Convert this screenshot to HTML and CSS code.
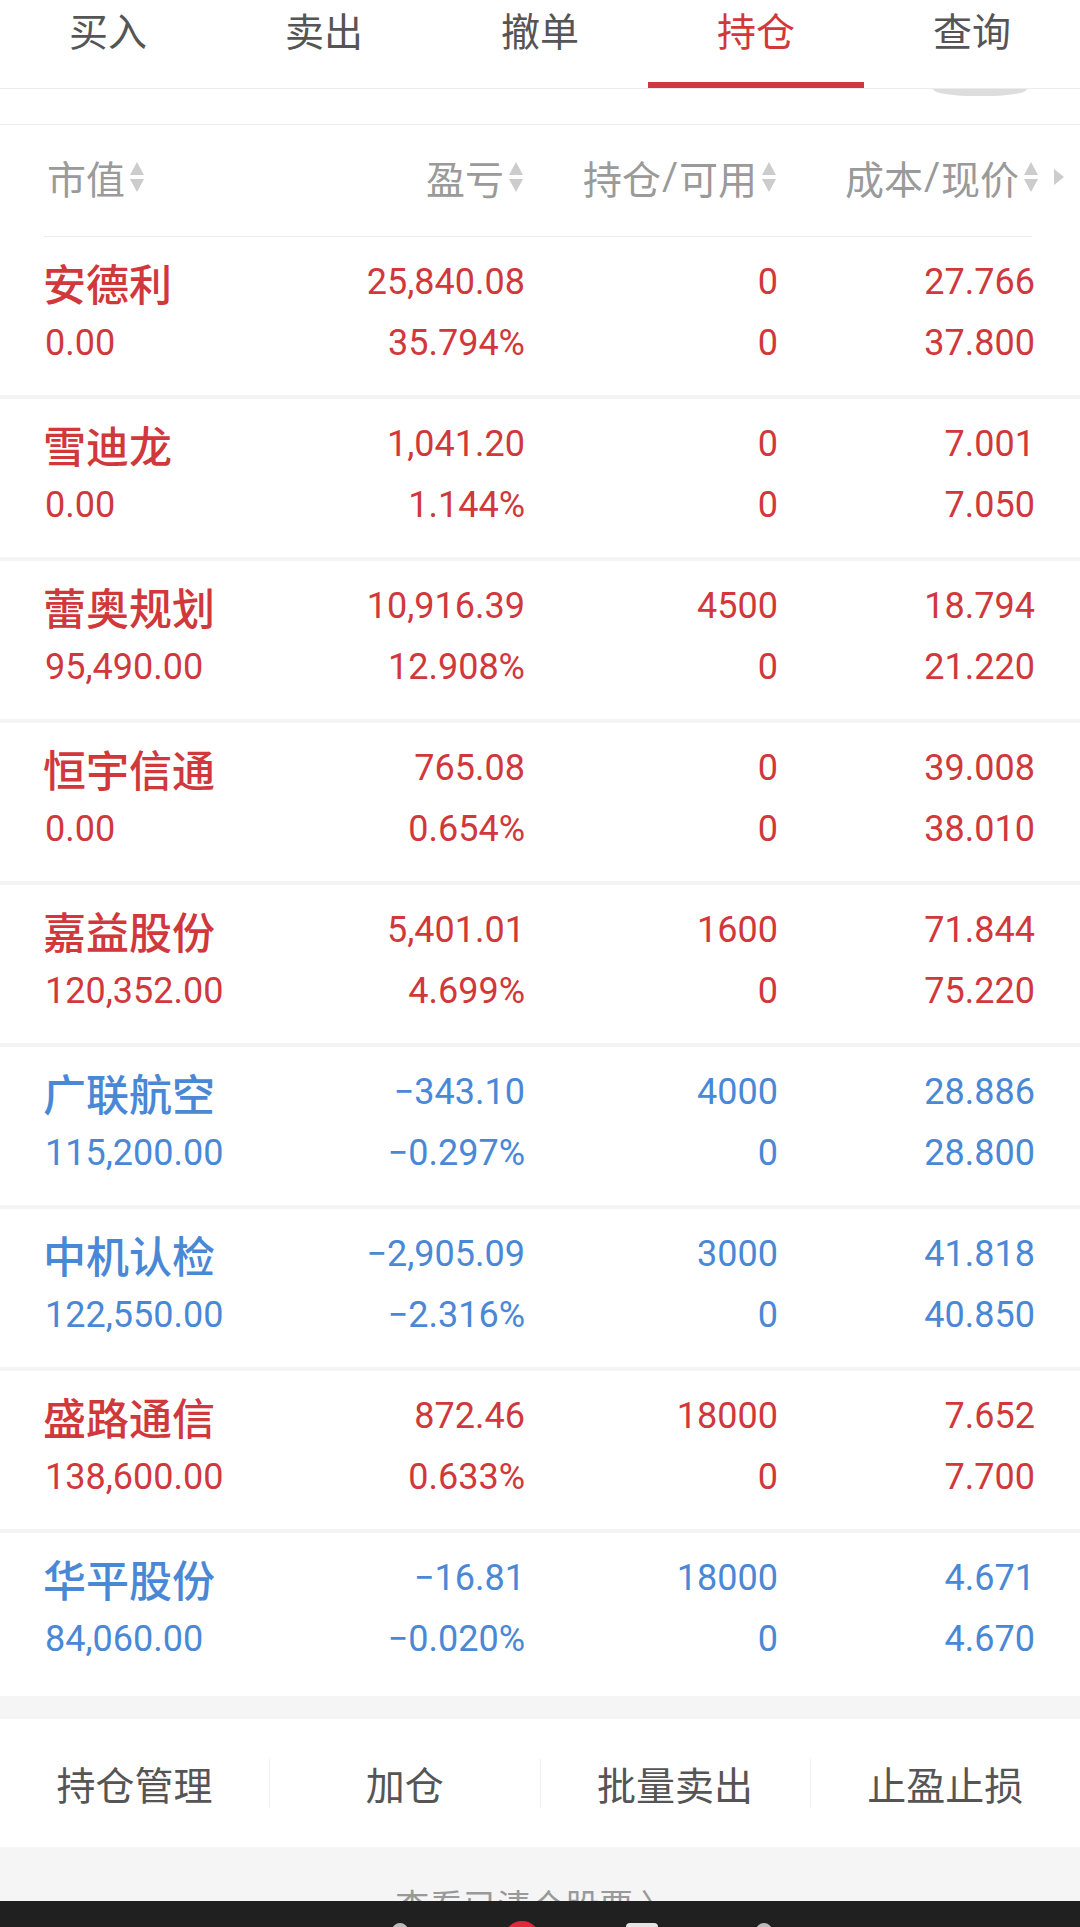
FILE: index.html
```html
<!DOCTYPE html>
<html lang="zh-CN">
<head>
<meta charset="utf-8">
<title>持仓</title>
<link rel="stylesheet" href="styles.css">
</head>
<body>
<div class="page">
  <nav class="tabs">
    <div class="tab"><span class="tab-label">买入</span></div>
    <div class="tab"><span class="tab-label">卖出</span></div>
    <div class="tab"><span class="tab-label">撤单</span></div>
    <div class="tab active"><span class="tab-label">持仓</span><span class="tab-bar"></span></div>
    <div class="tab"><span class="tab-label">查询</span></div>
  </nav>
  <div class="subbar"><span class="pill"></span></div>

  <div class="thead-wrap">
    <div class="thead">
      <div class="th left">市值<svg class="sort" viewBox="0 0 18 30"><path d="M9 0 L16 13 H2 Z"/><path d="M2 17 H16 L9 30 Z"/></svg></div>
      <div class="th">盈亏<svg class="sort" viewBox="0 0 18 30"><path d="M9 0 L16 13 H2 Z"/><path d="M2 17 H16 L9 30 Z"/></svg></div>
      <div class="th">持仓<span class="slash">/</span>可用<svg class="sort" viewBox="0 0 18 30"><path d="M9 0 L16 13 H2 Z"/><path d="M2 17 H16 L9 30 Z"/></svg></div>
      <div class="th last">成本<span class="slash">/</span>现价<svg class="sort" viewBox="0 0 18 30"><path d="M9 0 L16 13 H2 Z"/><path d="M2 17 H16 L9 30 Z"/></svg></div>
    </div>
    <svg class="more-arrow" viewBox="0 0 10 16"><path d="M0 0 L10 8 L0 16 Z"/></svg>
  </div>

  <div class="list">
    <div class="row up">
      <div class="name">安德利</div><div class="num">25,840.08</div><div class="num">0</div><div class="num">27.766</div>
      <div class="num l">0.00</div><div class="num">35.794%</div><div class="num">0</div><div class="num">37.800</div>
    </div>
    <div class="row up">
      <div class="name">雪迪龙</div><div class="num">1,041.20</div><div class="num">0</div><div class="num">7.001</div>
      <div class="num l">0.00</div><div class="num">1.144%</div><div class="num">0</div><div class="num">7.050</div>
    </div>
    <div class="row up">
      <div class="name">蕾奥规划</div><div class="num">10,916.39</div><div class="num">4500</div><div class="num">18.794</div>
      <div class="num l">95,490.00</div><div class="num">12.908%</div><div class="num">0</div><div class="num">21.220</div>
    </div>
    <div class="row up">
      <div class="name">恒宇信通</div><div class="num">765.08</div><div class="num">0</div><div class="num">39.008</div>
      <div class="num l">0.00</div><div class="num">0.654%</div><div class="num">0</div><div class="num">38.010</div>
    </div>
    <div class="row up">
      <div class="name">嘉益股份</div><div class="num">5,401.01</div><div class="num">1600</div><div class="num">71.844</div>
      <div class="num l">120,352.00</div><div class="num">4.699%</div><div class="num">0</div><div class="num">75.220</div>
    </div>
    <div class="row down">
      <div class="name">广联航空</div><div class="num">−343.10</div><div class="num">4000</div><div class="num">28.886</div>
      <div class="num l">115,200.00</div><div class="num">−0.297%</div><div class="num">0</div><div class="num">28.800</div>
    </div>
    <div class="row down">
      <div class="name">中机认检</div><div class="num">−2,905.09</div><div class="num">3000</div><div class="num">41.818</div>
      <div class="num l">122,550.00</div><div class="num">−2.316%</div><div class="num">0</div><div class="num">40.850</div>
    </div>
    <div class="row up">
      <div class="name">盛路通信</div><div class="num">872.46</div><div class="num">18000</div><div class="num">7.652</div>
      <div class="num l">138,600.00</div><div class="num">0.633%</div><div class="num">0</div><div class="num">7.700</div>
    </div>
    <div class="row down">
      <div class="name">华平股份</div><div class="num">−16.81</div><div class="num">18000</div><div class="num">4.671</div>
      <div class="num l">84,060.00</div><div class="num">−0.020%</div><div class="num">0</div><div class="num">4.670</div>
    </div>
  </div>

  <div class="band"></div>

  <div class="actions">
    <div class="action">持仓管理</div>
    <div class="action">加仓</div>
    <div class="action">批量卖出</div>
    <div class="action">止盈止损</div>
  </div>

  <div class="cleared"><span>查看已清仓股票 〉</span></div>

  <div class="sysbar">
    <span class="dot grey"></span>
    <span class="dot red"></span>
    <span class="sq"></span>
    <span class="dot grey2"></span>
  </div>
</div>
</body>
</html>
```

FILE: styles.css
```css
* { box-sizing: border-box; }

html, body {
  margin: 0;
  padding: 0;
  background: #ffffff;
}

body {
  width: 1080px;
  height: 1927px;
  overflow: hidden;
  font-family: "Noto Sans CJK SC", "Noto Sans", sans-serif;
}

.page {
  display: flex;
  flex-direction: column;
  width: 1080px;
  height: 1927px;
}

/* tabs */
.tabs {
  display: flex;
  height: 89px;
  border-bottom: 1px solid #ececec;
}

.tab {
  flex: 1;
  display: flex;
  flex-direction: column;
  align-items: stretch;
}

.tab-label {
  height: 58px;
  line-height: 58px;
  text-align: center;
  font-size: 39px;
  color: #555555;
}

.tab.active .tab-label {
  color: #d2373c;
}

.tab-bar {
  margin-top: auto;
  height: 6px;
  background: #d2373c;
}

.subbar {
  position: relative;
  height: 36px;
  border-bottom: 1px solid #ececec;
}

.pill {
  position: absolute;
  left: 933px;
  top: 0;
  width: 94px;
  height: 7px;
  background: #dddddd;
  border-radius: 0 0 40px 40px / 0 0 7px 7px;
}

/* header */
.thead-wrap {
  position: relative;
  padding: 0 48px 0 44px;
}

.thead {
  display: grid;
  grid-template-columns: 233px 248px 253px 254px;
  height: 112px;
  padding-bottom: 8px;
  align-items: center;
  border-bottom: 1px solid #eeeeee;
}

.th {
  display: flex;
  align-items: center;
  justify-content: flex-end;
  font-size: 39px;
  color: #9a9a9a;
  white-space: nowrap;
}

.th .slash {
  font-family: "Roboto", sans-serif;
  margin: 0 1px;
}

.th.left {
  justify-content: flex-start;
  padding-left: 3px;
}

.th.last {
  margin-right: -8px;
}

.sort {
  width: 18px;
  height: 30px;
  margin-left: 3px;
  fill: #cccccc;
}

.more-arrow {
  position: absolute;
  left: 1054px;
  top: 44px;
  width: 10px;
  height: 16px;
  fill: #cccccc;
}

/* rows */
.list {
  display: flex;
  flex-direction: column;
}

.row {
  display: grid;
  grid-template-columns: 232px 248px 253px 257px;
  grid-template-rows: 56px 56px;
  row-gap: 5px;
  align-items: center;
  height: 162px;
  padding: 17px 45px 0;
  border-bottom: 4px solid #f4f4f4;
}

.row:last-child {
  border-bottom: none;
  height: 163px;
}

.row.up { color: #d0383b; }
.row.down { color: #4a88d6; }

.name {
  font-size: 43px;
  font-weight: 500;
  margin-left: -2px;
  white-space: nowrap;
}

.num {
  font-family: "Roboto", "Liberation Sans", sans-serif;
  font-size: 36px;
  text-align: right;
  white-space: nowrap;
}

.num.l {
  text-align: left;
}

.band {
  height: 23px;
  background: #f5f5f5;
}

/* actions */
.actions {
  display: flex;
  align-items: center;
  height: 128px;
}

.action {
  flex: 1;
  height: 49px;
  line-height: 49px;
  text-align: center;
  font-size: 39px;
  color: #555555;
}

.action + .action {
  border-left: 1px solid #f0f0f0;
}

.cleared {
  height: 54px;
  background: #f5f5f5;
  overflow: hidden;
  text-align: center;
  padding-top: 38px;
  padding-right: 10px;
}

.cleared span {
  font-size: 34px;
  line-height: 40px;
  color: #999999;
}

.sysbar {
  position: relative;
  flex: 1;
  background: #202020;
  overflow: hidden;
}

.sysbar .dot,
.sysbar .sq {
  position: absolute;
  top: 22px;
}

.dot.grey {
  left: 392px;
  width: 16px;
  height: 16px;
  border-radius: 50%;
  background: #bbbbbb;
}

.dot.red {
  left: 504px;
  width: 36px;
  height: 36px;
  border-radius: 50%;
  background: #e0283a;
  top: 20px;
}

.sq {
  left: 626px;
  width: 32px;
  height: 20px;
  border-radius: 4px;
  background: #e5e5e5;
}

.dot.grey2 {
  left: 756px;
  width: 16px;
  height: 16px;
  border-radius: 50%;
  background: #bbbbbb;
}
```
